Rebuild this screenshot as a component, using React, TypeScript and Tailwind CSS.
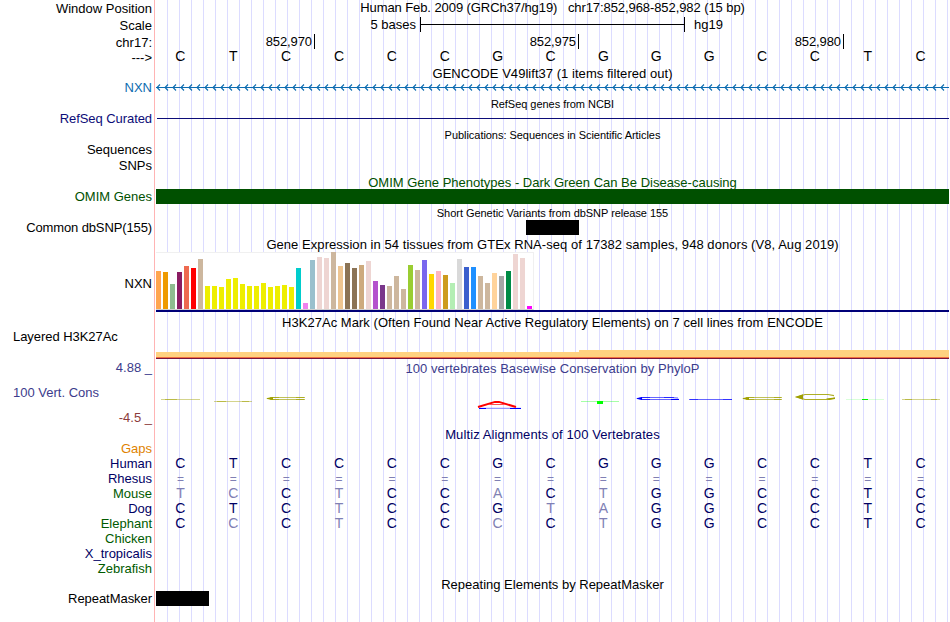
import type { ReactNode } from 'react';
import clsx from 'clsx';

const SEQUENCE = 'CTCCCCGCGGGCCTC';

// lower case = base differs from the human reference
const SPECIES = [
  { name: 'Human', tone: 'text-[#000064]', bases: 'CTCCCCGCGGGCCTC' },
  { name: 'Rhesus', tone: 'text-[#000064]', bases: '===============' },
  { name: 'Mouse', tone: 'text-[#005a00]', bases: 'tcCtCCaCtGGCCTC' },
  { name: 'Dog', tone: 'text-[#000064]', bases: 'CTCtCCGtaGGCCTC' },
  { name: 'Elephant', tone: 'text-[#005a00]', bases: 'CcCtCCcCtGGCCTC' },
  { name: 'Chicken', tone: 'text-[#005a00]', bases: '' },
  { name: 'X_tropicalis', tone: 'text-[#000064]', bases: '' },
  { name: 'Zebrafish', tone: 'text-[#005a00]', bases: '' },
];

const TISSUES: [number, string][] = [
  [38, '#ffa54f'], [37, '#ee9a00'], [25, '#8fbc8f'], [37, '#8b1c62'], [43, '#ee6a50'], [41, '#ff0000'],
  [50, '#cdb79e'], [23, '#eeee00'], [23, '#eeee00'], [22, '#eeee00'], [30, '#eeee00'], [31, '#eeee00'],
  [25, '#eeee00'], [23, '#eeee00'], [23, '#eeee00'], [26, '#eeee00'], [22, '#eeee00'], [23, '#eeee00'],
  [24, '#eeee00'], [22, '#eeee00'], [41, '#00cdcd'], [6, '#ee82ee'], [49, '#9ac0cd'], [52, '#eed5d2'],
  [51, '#eed5d2'], [57, '#cdb79e'], [43, '#eec591'], [46, '#8b7355'], [41, '#8b7355'], [44, '#cdaa7d'],
  [48, '#eed5d2'], [28, '#b452cd'], [24, '#7a378b'], [23, '#cdb79e'], [33, '#cdb79e'], [20, '#cdb79e'],
  [44, '#9acd32'], [39, '#cdb79e'], [49, '#7a67ee'], [35, '#ffd700'], [38, '#ffb6c1'], [34, '#cd9b1d'],
  [26, '#b4eeb4'], [50, '#d9d9d9'], [42, '#3a5fcd'], [42, '#1e90ff'], [33, '#cdb79e'], [26, '#cdb79e'],
  [36, '#ffd39b'], [33, '#a6a6a6'], [38, '#008b45'], [55, '#eed5d2'], [51, '#eed5d2'], [3, '#ff00ff'],
];

export default function App() {
  return (
    <div className="flex h-[622px] w-[950px] flex-col overflow-hidden whitespace-nowrap bg-white font-['Liberation_Sans',Arial,sans-serif] text-[13px] leading-[15px] text-black">
      <Row height="h-[17px]" label="Window Position" labelClass="pt-px">
        <Title className="whitespace-pre tracking-[-0.08px]">
          {'Human Feb. 2009 (GRCh37/hg19)   chr17:852,968-852,982 (15 bp)'}
        </Title>
      </Row>
      <Row height="h-[17px]" label="Scale" labelClass="pt-px">
        <div className="flex">
          <span className="w-[260px] text-right">5 bases</span>
          <div className="ml-1 flex h-[15px] w-[265px] items-center border-x border-black">
            <div className="h-px w-full bg-black" />
          </div>
          <span className="ml-[9px]">hg19</span>
        </div>
      </Row>
      <Row height="h-[15px]" label="chr17:" labelClass="pt-px">
        <div className="flex text-right tracking-[-0.1px]">
          <span className="w-[159px] border-r border-black pr-[2px]">852,970</span>
          <span className="w-[264px] border-r border-black pr-[2px]">852,975</span>
          <span className="w-[265px] border-r border-black pr-[2px]">852,980</span>
        </div>
      </Row>
      <Row height="h-[17px]" label="--->" labelClass="pt-px">
        <Bases bases={SEQUENCE} />
      </Row>

      <Row height="h-[14px]">
        <Title className="tracking-[0.04px]">GENCODE V49lift37 (1 items filtered out)</Title>
      </Row>
      <Row height="h-[16px]" label="NXN" labelClass="text-[#0c6cb0]">
        <GeneArrows />
      </Row>

      <Row height="h-[15px]">
        <Title small>RefSeq genes from NCBI</Title>
      </Row>
      <Row height="h-[16px]" label="RefSeq Curated" labelClass="text-[#0c0c78] tracking-[-0.07px]">
        <div className="ml-px pt-[7px]">
          <div className="h-px bg-[#0c0c78]" />
        </div>
      </Row>

      <Row height="h-[15px]">
        <Title small>Publications: Sequences in Scientific Articles</Title>
      </Row>
      <Row height="h-[16px]" label="Sequences" />
      <Row height="h-[17px]" label="SNPs" />

      <Row height="h-[14px]">
        <Title className="text-[#005000]">OMIM Gene Phenotypes - Dark Green Can Be Disease-causing</Title>
      </Row>
      <Row height="h-[16px]" label="OMIM Genes" labelClass="text-[#005000]">
        <div className="h-[15px] bg-[#005000]" />
      </Row>

      <Row height="h-[15px]">
        <Title small>Short Genetic Variants from dbSNP release 155</Title>
      </Row>
      <Row height="h-[17px]" label="Common dbSNP(155)" labelClass="tracking-[-0.12px]">
        <div className="ml-[370px] h-[15px] w-[53px] bg-black" />
      </Row>

      <Row height="h-[15px]">
        <Title className="tracking-[0.055px]">
          Gene Expression in 54 tissues from GTEx RNA-seq of 17382 samples, 948 donors (V8, Aug 2019)
        </Title>
      </Row>
      <Row height="h-[63px]" label="NXN" labelClass="pt-6">
        <div className="flex h-[58px] w-[378px] items-end gap-[2px] border-b border-r border-t border-[#f0f0f0] border-b-[#d0d0d0] bg-white">
          {TISSUES.map(([height, color], i) => (
            <div key={i} className="w-[5px] shrink-0" style={{ height, backgroundColor: color }} />
          ))}
        </div>
        <div className="h-[2px] bg-[#000078]" />
      </Row>

      <Row height="h-[15px]">
        <Title className="tracking-[0.04px]">
          H3K27Ac Mark (Often Found Near Active Regulatory Elements) on 7 cell lines from ENCODE
        </Title>
      </Row>
      <Row height="h-[31px]" label="Layered H3K27Ac" labelClass="-mt-px pl-[13px] text-left tracking-[-0.05px]">
        <div className="flex h-[27px] items-end pt-5">
          <div className="h-[5px] w-[423px] bg-[#ffd280]" />
          <div className="h-[7px] flex-1 bg-[#ffd280]" />
        </div>
        <div className="h-px bg-[#f07040]" />
        <div className="h-px bg-[#78143c]" />
      </Row>

      <Row height="h-[15px]" label="4.88 _" labelClass="-mt-px text-[#3c3c8c]">
        <Title className="tracking-[0.04px] text-[#3c3c8c]">100 vertebrates Basewise Conservation by PhyloP</Title>
      </Row>
      <Row
        height="h-[51px]"
        label={
          <div className="flex flex-col gap-[10px] pt-[9px]">
            <span className="pl-[13px] text-left text-[#3c3c8c]">100 Vert. Cons</span>
            <span className="text-[#8c3c3c]">-4.5 _</span>
          </div>
        }
      >
        <ConservationLogo />
      </Row>

      <Row height="h-[14px]">
        <Title className="tracking-[0.1px] text-[#000064]">Multiz Alignments of 100 Vertebrates</Title>
      </Row>
      <Row height="h-[15px]" label="Gaps" labelClass="text-[#e08200]" />
      {SPECIES.map((s) => (
        <Row key={s.name} height="h-[15px]" label={s.name} labelClass={s.tone}>
          <Bases bases={s.bases} className="text-[#000064]" />
        </Row>
      ))}

      <Row height="h-[15px]">
        <Title className="pt-px">Repeating Elements by RepeatMasker</Title>
      </Row>
      <Row height="h-[31px]" label="RepeatMasker" labelClass="tracking-[-0.05px]">
        <div className="h-[15px] w-[53px] bg-black" />
      </Row>
    </div>
  );
}

function Row({
  height,
  label,
  labelClass,
  children,
}: {
  height: string;
  label?: ReactNode;
  labelClass?: string;
  children?: ReactNode;
}) {
  return (
    <div className={clsx('flex shrink-0', height)}>
      <div className={clsx('w-[154px] shrink-0 pr-[2px]', !labelClass?.includes('text-left') && 'text-right', labelClass)}>
        {label}
      </div>
      <div className="mr-px w-px shrink-0 bg-[#ffb4b4]" />
      <div className="w-[793px] shrink-0 bg-[repeating-linear-gradient(to_right,transparent_0px,transparent_11px,#dcdcff_11px,#dcdcff_12px)]">
        {children}
      </div>
    </div>
  );
}

function Title({ small, className, children }: { small?: boolean; className?: string; children: ReactNode }) {
  return (
    <div className={clsx('text-center', small && 'pt-px text-[11px] tracking-[-0.04px]', className)}>{children}</div>
  );
}

function Bases({ bases, className }: { bases: string; className?: string }) {
  return (
    <div className={clsx('-ml-[2px] grid w-[793px] grid-cols-[repeat(15,minmax(0,1fr))] text-center text-sm/[15px]', className)}>
      {bases.split('').map((b, i) => (
        <span
          key={i}
          className={clsx(b === '=' && 'pt-px text-xs/[14px]', (b === '=' || b !== b.toUpperCase()) && 'text-[#8080b4]')}
        >
          {b.toUpperCase()}
        </span>
      ))}
    </div>
  );
}

function GeneArrows() {
  return (
    <svg width="793" height="15" className="block" stroke="#0c6cb0" fill="none">
      <path d="M0 7.5H793" shapeRendering="crispEdges" />
      {Array.from({ length: 99 }, (_, i) => (
        <path key={i} d={`M${i * 8 + 4} 4.5L${i * 8 + 1} 7.5L${i * 8 + 4} 10.5`} strokeWidth="1.1" />
      ))}
    </svg>
  );
}

// letters are squashed to the height of the score, so most are only slivers
function ConservationLogo() {
  return (
    <svg width="793" height="51" viewBox="156 376 793 51" className="block" fill="none">
      <path d="M161 399.5H200M902 399.5H940" stroke="#a0a000" strokeOpacity="0.45" />
      <path d="M165 399.5H177M905 399.5H912M931 399.5H937" stroke="#a0a000" strokeOpacity="0.5" />
      <path d="M214 401.5H252" stroke="#a0a000" strokeOpacity="0.45" />
      <path d="M217 401.5H226M242 401.5H249" stroke="#a0a000" strokeOpacity="0.5" />

      <path d="M305 397.5H272L267 398.5L272 399.5H305" stroke="#a0a000" strokeOpacity="0.65" />
      <path d="M266 398.5L273 397V400Z" fill="#a0a000" />
      <path d="M270 397.5H279M296 397.5H304M270 399.5H279M296 399.5H304" stroke="#a0a000" strokeOpacity="0.6" />

      <path d="M479 408.3H521" stroke="#8080ff" />
      <path d="M479 408.5H486M510 408.5H521" stroke="#0000ff" />
      <path d="M478 407L495 401.9H499L516 407" stroke="#ff0000" strokeWidth="2" />
      <path d="M489 404.5H505" stroke="#ff5050" />

      <path d="M581 401.5H619" stroke="#00ff00" strokeOpacity="0.35" />
      <path d="M597 401H603V404H597Z" fill="#00ff00" />

      <path d="M678 398L671 397.5H643L637 398.5L643 399.5H671L679 399.3" stroke="#0000ff" strokeOpacity="0.6" />
      <path d="M641 397.5H650M664 397.5H674M641 399.5H650" stroke="#0000ff" strokeOpacity="0.6" />
      <path d="M636 398.5L642 397V400ZM671 399H679V400H671Z" fill="#0000ff" />

      <path d="M689 399.5H732" stroke="#0000ff" strokeOpacity="0.6" />
      <path d="M690 399.5H698M723 399.5H732" stroke="#0000ff" strokeOpacity="0.5" />

      <path d="M782 397.5H748L743 398.5L748 399.5H782" stroke="#a0a000" strokeOpacity="0.65" />
      <path d="M742 398.5L749 397V400Z" fill="#a0a000" />
      <path d="M746 397.5H754M774 397.5H781M746 399.5H754M774 399.5H781" stroke="#a0a000" strokeOpacity="0.6" />

      <path d="M834 395.7L828 394.5H805L797 397L805 399.5H828L835 398" stroke="#a0a000" strokeOpacity="0.85" strokeWidth="1.2" />
      <path d="M795 397L803 394.3V399.7ZM826 398.5L835 397.5V399L829 400Z" fill="#a0a000" />

      <path d="M846 399.5H884" stroke="#00ff00" strokeOpacity="0.15" />
      <path d="M862 399.5H868" stroke="#00f000" />
    </svg>
  );
}
